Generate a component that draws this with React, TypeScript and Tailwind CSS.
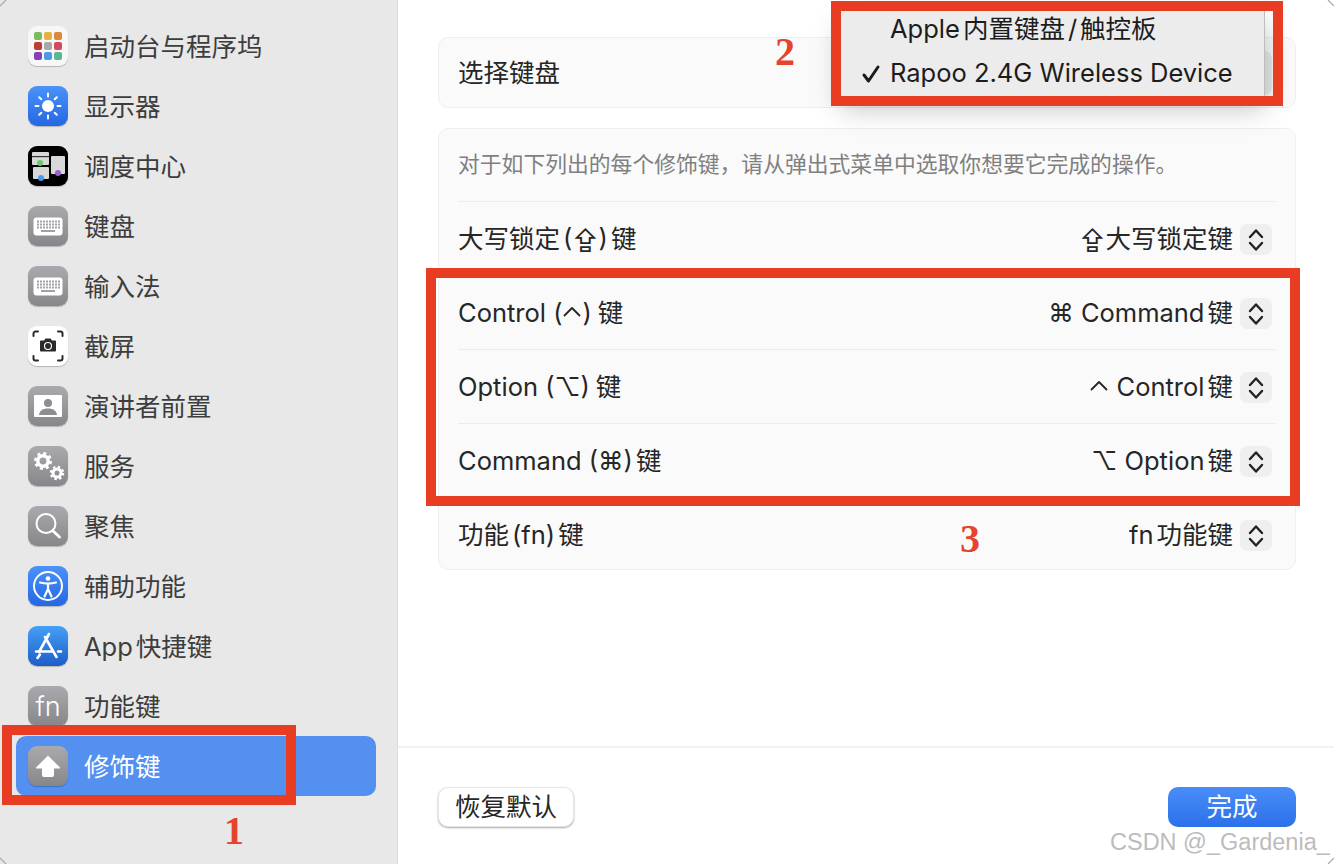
import React from "react";

const FONT = "[font-family:Inter,'Noto_Sans_CJK_SC','DejaVu_Sans',sans-serif]";

function Tile({ children, className }: { children: React.ReactNode; className: string }) {
  return (
    <div className={`w-10 h-10 rounded-[9px] shrink-0 flex items-center justify-center overflow-hidden shadow-[0_1px_1px_rgba(0,0,0,0.22)] ${className}`}>
      {children}
    </div>
  );
}

const GRAY = "bg-gradient-to-b from-[#a9a9ae] to-[#86868b]";
const BLUE = "bg-gradient-to-b from-[#4b92f8] to-[#2468e4]";

function KeyboardGlyph() {
  return (
    <svg width="30" height="19" viewBox="0 0 30 19">
      <rect x="0.5" y="0.5" width="29" height="18" rx="3" fill="#fff" />
      {[3.5, 6.5, 9.5].map((y) => (
        <g key={y}>
          {[4, 7, 10, 13, 16, 19, 22, 25].map((x) => (
            <rect key={x} x={x} y={y} width="2" height="2" fill="#a2a2a6" />
          ))}
        </g>
      ))}
      <rect x="8" y="13" width="14" height="2" fill="#a2a2a6" />
    </svg>
  );
}

const launch = ["#7abd5f", "#e8b040", "#d98a3a", "#c13a32", "#a8a8a8", "#d8485c", "#8a3fb5", "#4a9ae8", "#5ab890"];

const icons: React.ReactNode[] = [
  <Tile key="0" className="bg-[#f7f7f7]">
    <div className="grid grid-cols-3 gap-[2px]">
      {launch.map((c) => (
        <div key={c} className="w-[8px] h-[8px] rounded-[2px]" style={{ background: c }} />
      ))}
    </div>
  </Tile>,
  <Tile key="1" className={BLUE}>
    <svg width="30" height="30" viewBox="0 0 30 30" stroke="#fff" strokeWidth="2" strokeLinecap="round">
      <circle cx="15" cy="15" r="6" fill="#fff" stroke="none" />
      <path d="M15 2.500v3M15 24.500v3M2.500 15h3M24.500 15h3M6.200 6.200l2.100 2.100M21.700 21.700l2.100 2.100M6.200 23.800l2.100-2.100M21.700 8.300l2.100-2.100" />
    </svg>
  </Tile>,
  <Tile key="2" className="bg-black">
    <svg width="40" height="40" viewBox="0 0 40 40">
      <rect x="4" y="6" width="17" height="13" rx="1" fill="#d8d8d8" />
      <rect x="4" y="10" width="17" height="1.200" fill="#333" />
      <rect x="23" y="10" width="14" height="18" rx="1" fill="#d8d8d8" />
      <rect x="5" y="21" width="16" height="12" rx="1" fill="#d8d8d8" />
      <circle cx="12" cy="17" r="3" fill="#69c866" />
      <circle cx="13" cy="32" r="3" fill="#4a9bea" />
      <circle cx="30" cy="27" r="3" fill="#9a5fd0" />
    </svg>
  </Tile>,
  <Tile key="3" className={GRAY}><KeyboardGlyph /></Tile>,
  <Tile key="4" className={GRAY}><KeyboardGlyph /></Tile>,
  <Tile key="5" className="bg-white">
    <svg width="34" height="34" viewBox="0 0 34 34" fill="none">
      <path d="M7 2.500H4.500a2 2 0 0 0-2 2V7M27 2.500h2.500a2 2 0 0 1 2 2V7M7 31.500H4.500a2 2 0 0 1-2-2V27M27 31.500h2.500a2 2 0 0 0 2-2V27" stroke="#2a2a2a" strokeWidth="2" strokeLinecap="round" />
      <path d="M10 11.500h3l1.500-2h5l1.500 2h3a1 1 0 0 1 1 1v9a1 1 0 0 1-1 1H10a1 1 0 0 1-1-1v-9a1 1 0 0 1 1-1z" fill="#2a2a2a" />
      <circle cx="17" cy="17" r="3.500" fill="#2a2a2a" stroke="#fff" strokeWidth="1.200" />
    </svg>
  </Tile>,
  <Tile key="6" className={GRAY}>
    <svg width="28" height="22" viewBox="0 0 28 22">
      <rect width="28" height="22" rx="1" fill="#fff" />
      <circle cx="14" cy="8" r="4" fill="#8d8d92" />
      <path d="M5 20c.5-4.500 4-6.500 9-6.500s8.500 2 9 6.500z" fill="#8d8d92" />
    </svg>
  </Tile>,
  <Tile key="7" className={GRAY}>
    <svg width="36" height="36" viewBox="0 0 36 36">
      <circle cx="13" cy="13" r="5.200" fill="none" stroke="#fff" strokeWidth="3.500" />
      <circle cx="13" cy="13" r="7.500" fill="none" stroke="#fff" strokeWidth="3" strokeDasharray="3 2.890" />
      <circle cx="27" cy="25" r="4" fill="none" stroke="#fff" strokeWidth="3" />
      <circle cx="27" cy="25" r="6" fill="none" stroke="#fff" strokeWidth="2.500" strokeDasharray="2.400 2.310" />
    </svg>
  </Tile>,
  <Tile key="8" className={GRAY}>
    <svg width="30" height="30" viewBox="0 0 30 30" fill="none" stroke="#fff" strokeLinecap="round">
      <circle cx="13" cy="12.500" r="9.500" strokeWidth="2" />
      <path d="M20 20l6.500 6" strokeWidth="2.800" />
    </svg>
  </Tile>,
  <Tile key="9" className={BLUE}>
    <svg width="32" height="32" viewBox="0 0 32 32" fill="none" stroke="#fff">
      <circle cx="16" cy="16" r="14" strokeWidth="2" />
      <circle cx="16" cy="8.500" r="2.300" fill="#fff" stroke="none" />
      <path d="M8 12.500c5 1.300 11 1.300 16 0M16 14v6M16 19l-3.500 7.500M16 19l3.500 7.500" strokeWidth="2.200" strokeLinecap="round" />
    </svg>
  </Tile>,
  <Tile key="10" className="bg-gradient-to-b from-[#46a0f5] to-[#1f5dc8]">
    <svg width="32" height="32" viewBox="0 0 32 32" fill="none" stroke="#fff" strokeWidth="2.600" strokeLinecap="round">
      <path d="M17 4L7 22M13 7l11.500 20M4 21.500h17M26 21.500h3M8 24.500L5.500 28" />
    </svg>
  </Tile>,
  <Tile key="11" className={GRAY}>
    <span className="text-white text-[27px] leading-none [font-family:Inter,sans-serif] font-light">fn</span>
  </Tile>,
  <Tile key="12" className={GRAY}>
    <svg width="28" height="24" viewBox="0 0 28 24">
      <path d="M14 1.500L26 13.500a.6.6 0 0 1-.4 1H20v6.500a2 2 0 0 1-2 2H10a2 2 0 0 1-2-2v-6.500H2.400a.6.6 0 0 1-.4-1z" fill="#fff" />
    </svg>
  </Tile>,
];

function Caret() {
  return (
    <svg className="inline-block align-baseline mx-[1px]" width="18" height="17" viewBox="0 0 18 17" fill="none" stroke="currentColor" strokeWidth="1.800" strokeLinecap="round" strokeLinejoin="round">
      <path d="M1.500 10.500L9 3l7.500 7.500" />
    </svg>
  );
}

// "|" stands for the thin gap the reference leaves between scripts; "^" is the control-key caret.
function Label({ text }: { text: string }) {
  return (
    <>
      {text.split(/([|^])/).map((p, i) =>
        p === "|" ? (
          <span key={i} className="inline-block w-[3px]" />
        ) : p === "^" ? (
          <Caret key={i} />
        ) : (
          <span key={i}>{p}</span>
        )
      )}
    </>
  );
}

const names = ["启动台与程序坞", "显示器", "调度中心", "键盘", "输入法", "截屏", "演讲者前置", "服务", "聚焦", "辅助功能", "App|快捷键", "功能键", "修饰键"];

const rows = [
  ["大写锁定|(⇪)|键", "⇪大写锁定键"],
  ["Control (^)||键", "⌘ Command|键"],
  ["Option (⌥)||键", "^ Control|键"],
  ["Command (⌘)|键", "⌥ Option|键"],
  ["功能|(fn)|键", "fn|功能键"],
];

function Stepper() {
  return (
    <div className="w-8 h-[31px] rounded-[7px] bg-[#efefef] flex items-center justify-center">
      <svg width="16" height="26" viewBox="0 0 16 26" fill="none" stroke="#222" strokeWidth="2.400" strokeLinecap="round" strokeLinejoin="round">
        <path d="M2 10l6-6.500 6 6.500M2 16l6 6.500 6-6.500" />
      </svg>
    </div>
  );
}

function RedBox({ className }: { className: string }) {
  return <div className={`absolute border-[10px] border-[#e83d22] ${className}`} />;
}

function Mark({ children, className }: { children: React.ReactNode; className: string }) {
  return (
    <span className={`absolute text-[40px] leading-none font-bold text-[#e5432d] [font-family:'Liberation_Serif',serif] ${className}`}>
      {children}
    </span>
  );
}

function Corner({ className, d }: { className: string; d: string }) {
  return (
    <svg className={`absolute ${className}`} width="7" height="7" viewBox="0 0 7 7" fill="none" stroke="#a8a8a8" strokeWidth="1.200">
      <path d={d} />
    </svg>
  );
}

export default function App() {
  return (
    <div className={`relative w-[1334px] h-[864px] overflow-hidden bg-white flex text-[25.5px] ${FONT}`}>
      <aside className="w-[398px] h-full shrink-0 bg-[#e8e8e8] border-r border-[#dcdcdc] pt-4 px-4 flex flex-col">
        {names.map((n, i) => (
          <div
            key={n}
            className={`h-[60px] shrink-0 w-[360px] rounded-[10px] pl-3 flex items-center gap-4 ${i === 12 ? "bg-[#5390f0] text-white" : "text-[#3d3d3d]"}`}
          >
            {icons[i]}
            <span className="pt-[2px]"><Label text={n} /></span>
          </div>
        ))}
      </aside>

      <main className="flex-1 flex flex-col text-[#262626]">
        <div className="flex-1 pt-[37px] pl-10 pr-[38px] flex flex-col gap-5">
          <section className="h-[71px] bg-[#fafafa] border border-[#efefef] rounded-[10px] pl-[19px] pr-[23px] flex items-center justify-between">
            <span className="pt-[2px]">选择键盘</span>
            <div className="w-[120px] h-[44px] rounded-[8px] bg-[#e9e9e9]" />
          </section>
          <section className="h-[442px] bg-[#fafafa] border border-[#efefef] rounded-[10px] px-[19px] flex flex-col">
            <div className="h-[72px] shrink-0 pb-[2px] flex items-center text-[21.8px] text-[#808080]">
              对于如下列出的每个修饰键，请从弹出式菜单中选取你想要它完成的操作。
            </div>
            {rows.map(([l, r], i) => (
              <div key={l} className={`${i === 4 ? "h-[72px] pt-1" : "h-[74px] pt-[2px]"} shrink-0 border-t border-[#ececec] flex items-center justify-between pr-1`}>
                <span><Label text={l} /></span>
                <span className="flex items-center gap-[7px]">
                  <span><Label text={r} /></span>
                  <Stepper />
                </span>
              </div>
            ))}
          </section>
        </div>
        <footer className="h-[118px] shrink-0 border-t-2 border-[#f2f2f2] pl-10 pr-[38px] pt-[39px] flex justify-between items-start">
          <button className="w-[136px] h-10 rounded-[10px] bg-white text-[#262626] border border-[#e6e6e6] shadow-[0_1px_2px_rgba(0,0,0,0.35)] flex items-center justify-center">
            恢复默认
          </button>
          <button className="w-[128px] h-10 rounded-[10px] bg-gradient-to-b from-[#4a8df8] to-[#2b70ea] text-white flex items-center justify-center">
            完成
          </button>
        </footer>
      </main>

      <div className="absolute left-[841px] top-[11px] w-[424px] h-[85px] bg-[#ececec] border-r border-[#bdbdbd] text-[#1c1c1c] shadow-[0_12px_26px_rgba(0,0,0,0.25)] flex flex-col">
        <div className="h-[36px] pl-[49px] flex items-center"><Label text="Apple|内置键盘|/|触控板" /></div>
        <div className="h-[49px] pl-[49px] pt-1 flex items-center relative">
          <svg className="absolute left-[20px] top-[17px]" width="20" height="20" viewBox="0 0 20 20" fill="none" stroke="#1c1c1c" strokeWidth="3" strokeLinecap="round" strokeLinejoin="round">
            <path d="M3 11l4.500 6L17 3" />
          </svg>
          Rapoo 2.4G Wireless Device
        </div>
      </div>

      <RedBox className="left-[2px] top-[725px] w-[294px] h-[80px]" />
      <RedBox className="left-[831px] top-px w-[452px] h-[105px]" />
      <RedBox className="left-[426px] top-[268px] w-[874px] h-[238px]" />

      <Mark className="left-[224px] top-[811px]">1</Mark>
      <Mark className="left-[775px] top-[32px]">2</Mark>
      <Mark className="left-[960px] top-[519px]">3</Mark>

      <span className="absolute left-[1110px] top-[828px] text-[23.5px] leading-[28px] text-[#bcbcbc] [font-family:'Liberation_Sans',sans-serif] [text-shadow:1px_1px_0_#fff]">
        CSDN @_Gardenia_
      </span>

      <Corner className="left-0 top-0" d="M0 6L6 0" />
      <Corner className="right-0 top-0" d="M1 0L7 6" />
      <Corner className="left-0 bottom-0" d="M0 1L6 7" />
      <Corner className="right-0 bottom-0" d="M7 1L1 7" />
    </div>
  );
}
